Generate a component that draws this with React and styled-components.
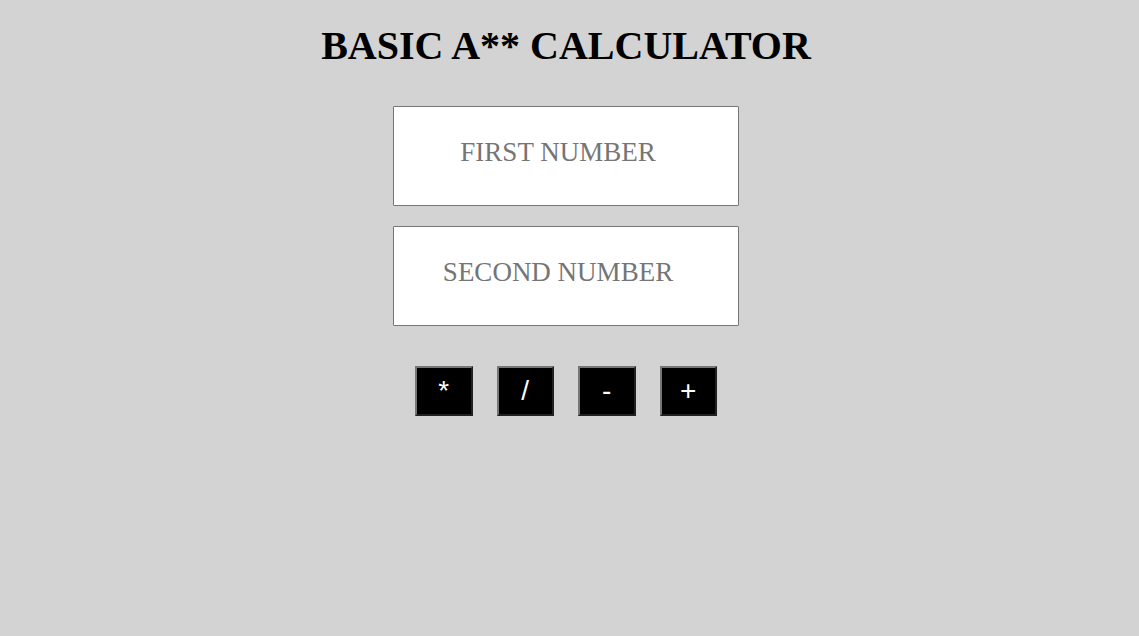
import React from "react";
import styled, { createGlobalStyle } from "styled-components";

const GlobalStyle = createGlobalStyle`
  html, body {
    margin: 0;
    padding: 0;
    background: #d3d3d3;
  }
  body {
    font-family: "Liberation Serif", "Times New Roman", serif;
  }
`;

const Page = styled.div`
  width: 1132px;
  min-height: 636px;
  display: flex;
  flex-direction: column;
  align-items: center;
`;

const Title = styled.h1`
  margin: 23px 0 0;
  font-size: 40px;
  line-height: 46px;
  font-weight: bold;
  color: #000;
`;

const Inputs = styled.div`
  display: flex;
  flex-direction: column;
  gap: 20px;
  margin-top: 37px;
`;

const NumberInput = styled.input`
  box-sizing: border-box;
  width: 346px;
  height: 100px;
  padding: 0 16px 8px 0;
  border: 1px solid #767676;
  border-radius: 1px;
  background: #fff;
  font-family: "Liberation Serif", "Times New Roman", serif;
  font-size: 27px;
  text-align: center;
  outline: none;

  &::placeholder {
    color: #757575;
  }
`;

const Operators = styled.div`
  display: flex;
  gap: 24px;
  margin-top: 40px;
`;

const OpButton = styled.button`
  box-sizing: border-box;
  width: 57.5px;
  height: 50px;
  padding: 0;
  background: #000;
  color: #fff;
  border: 2px outset #767676;
  font-family: "Liberation Sans", Arial, sans-serif;
  font-size: 28px;
  line-height: 1;
  cursor: pointer;
`;

export default function App() {
  const ops = ["*", "/", "-", "+"];
  return (
    <>
      <GlobalStyle />
      <Page>
        <Title>BASIC A** CALCULATOR</Title>
        <Inputs>
          <NumberInput type="text" placeholder="FIRST NUMBER" />
          <NumberInput type="text" placeholder="SECOND NUMBER" />
        </Inputs>
        <Operators>
          {ops.map((op) => (
            <OpButton key={op}>{op}</OpButton>
          ))}
        </Operators>
      </Page>
    </>
  );
}
